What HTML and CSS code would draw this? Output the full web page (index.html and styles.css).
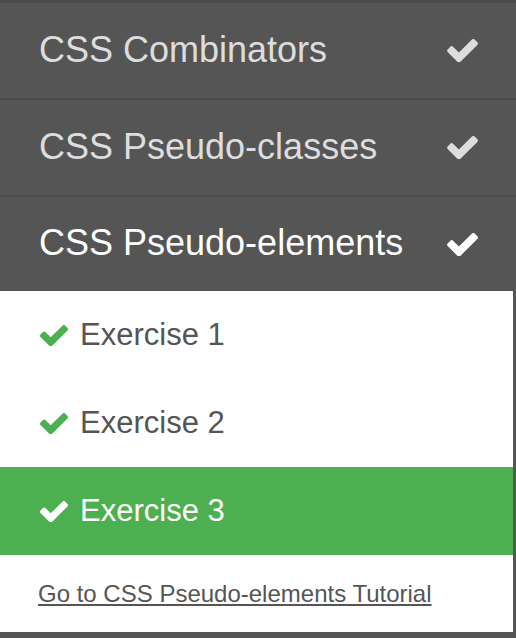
FILE: index.html
```html
<!DOCTYPE html>
<html>
<head>
<meta charset="utf-8">
<link rel="stylesheet" href="styles.css">
</head>
<body>
<div class="menu">
  <div class="topic done">
    <span class="topic-name">CSS Combinators</span>
    <svg class="check topic-check" viewBox="121 338 1550 1156"><path d="M1671 566q0 40-28 68l-724 724-136 136q-28 28-68 28t-68-28l-136-136-362-362q-28-28-28-68t28-68l136-136q28-28 68-28t68 28l294 295 656-657q28-28 68-28t68 28l136 136q28 28 28 68z"/></svg>
  </div>
  <div class="topic done">
    <span class="topic-name">CSS Pseudo-classes</span>
    <svg class="check topic-check" viewBox="121 338 1550 1156"><path d="M1671 566q0 40-28 68l-724 724-136 136q-28 28-68 28t-68-28l-136-136-362-362q-28-28-28-68t28-68l136-136q28-28 68-28t68 28l294 295 656-657q28-28 68-28t68 28l136 136q28 28 28 68z"/></svg>
  </div>
  <div class="topic active">
    <span class="topic-name">CSS Pseudo-elements</span>
    <svg class="check topic-check" viewBox="121 338 1550 1156"><path d="M1671 566q0 40-28 68l-724 724-136 136q-28 28-68 28t-68-28l-136-136-362-362q-28-28-28-68t28-68l136-136q28-28 68-28t68 28l294 295 656-657q28-28 68-28t68 28l136 136q28 28 28 68z"/></svg>
  </div>
  <div class="panel">
    <div class="exercise">
      <svg class="check ex-check" viewBox="121 338 1550 1156"><path d="M1671 566q0 40-28 68l-724 724-136 136q-28 28-68 28t-68-28l-136-136-362-362q-28-28-28-68t28-68l136-136q28-28 68-28t68 28l294 295 656-657q28-28 68-28t68 28l136 136q28 28 28 68z"/></svg>
      <span>Exercise 1</span>
    </div>
    <div class="exercise">
      <svg class="check ex-check" viewBox="121 338 1550 1156"><path d="M1671 566q0 40-28 68l-724 724-136 136q-28 28-68 28t-68-28l-136-136-362-362q-28-28-28-68t28-68l136-136q28-28 68-28t68 28l294 295 656-657q28-28 68-28t68 28l136 136q28 28 28 68z"/></svg>
      <span>Exercise 2</span>
    </div>
    <div class="exercise current">
      <svg class="check ex-check" viewBox="121 338 1550 1156"><path d="M1671 566q0 40-28 68l-724 724-136 136q-28 28-68 28t-68-28l-136-136-362-362q-28-28-28-68t28-68l136-136q28-28 68-28t68 28l294 295 656-657q28-28 68-28t68 28l136 136q28 28 28 68z"/></svg>
      <span>Exercise 3</span>
    </div>
    <div class="tutorial">
      <a href="#" class="tutorial-link">Go to CSS Pseudo-elements Tutorial</a>
    </div>
  </div>
</div>
</body>
</html>
```

FILE: styles.css
```css
html, body {
  margin: 0;
  padding: 0;
  background: #555555;
}

body {
  font-family: "Liberation Sans", Arial, Helvetica, sans-serif;
  width: 516px;
  height: 638px;
  overflow: hidden;
}

.menu {
  border-top: 3px solid #4b4b4b;
}

.topic {
  display: flex;
  align-items: center;
  justify-content: space-between;
  padding: 0 38px 0 39px;
  border-bottom: 2px solid #4b4b4b;
  box-sizing: border-box;
  height: 97px;
}

.topic.active {
  height: 94px;
  border-bottom: none;
}

.topic-name {
  font-size: 36px;
  color: #dddddd;
  padding-bottom: 2px;
}

.topic.active .topic-name {
  color: #ffffff;
}

.check {
  display: block;
}

.topic-check {
  width: 31px;
  height: 23px;
  fill: #dddddd;
}

.topic.active .topic-check {
  fill: #ffffff;
}

.panel {
  background: #ffffff;
  margin-right: 3px;
  height: 341px;
}

.exercise {
  display: flex;
  align-items: center;
  gap: 12px;
  height: 88px;
  padding-left: 40px;
  font-size: 31px;
  color: #555555;
}

.ex-check {
  width: 28px;
  height: 21px;
  fill: #4caf50;
}

.exercise.current {
  background: #4caf50;
  color: #ffffff;
}

.exercise.current .ex-check {
  fill: #ffffff;
}

.tutorial {
  height: 77px;
  display: flex;
  align-items: center;
  padding-left: 38px;
}

.tutorial-link {
  font-size: 24px;
  color: #555555;
  text-decoration: underline;
}
```
